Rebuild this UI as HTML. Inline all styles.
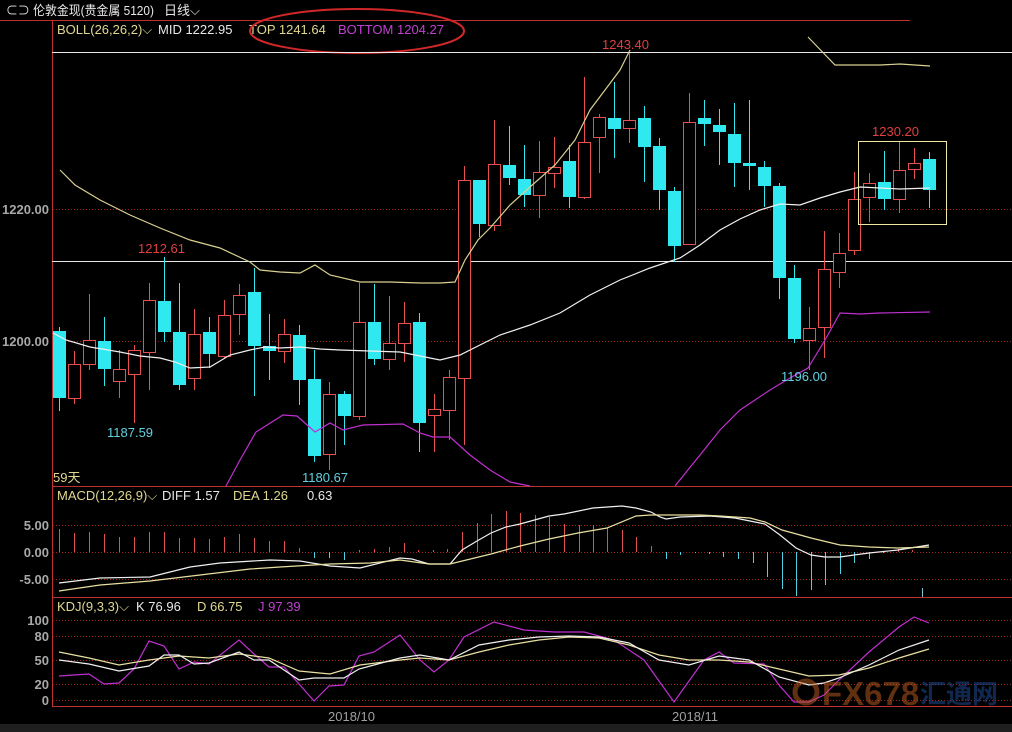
<!DOCTYPE html>
<html><head><meta charset="utf-8"><style>
html,body{margin:0;padding:0;background:#000;width:1012px;height:732px;overflow:hidden}
svg{display:block}
text{font-family:"Liberation Sans","Noto Sans CJK SC",sans-serif}
</style></head><body>
<svg id="s" width="1012" height="732" xmlns="http://www.w3.org/2000/svg" font-size="12">
<rect width="1012" height="732" fill="#000"/>
<rect x="0" y="724" width="1012" height="8" fill="#1f1f1f"/>
<text x="6" y="15" fill="#e8e8e8" style="font-size:13px" textLength="148" lengthAdjust="spacingAndGlyphs">⊂⊃ 伦敦金现(贵金属 5120)</text>
<text x="164" y="15" fill="#e8e8e8" style="font-size:13px">日线⌵</text>
<line x1="0" y1="20.5" x2="910" y2="20.5" stroke="#c03030"/>
<line x1="52.5" y1="20" x2="52.5" y2="706" stroke="#c03030"/>
<line x1="52" y1="486.5" x2="1012" y2="486.5" stroke="#c03030"/>
<line x1="52" y1="597.5" x2="1012" y2="597.5" stroke="#c03030"/>
<line x1="52" y1="706.5" x2="1012" y2="706.5" stroke="#c03030"/>
<g style="font-size:13px">
<text x="57" y="34" fill="#e0d890">BOLL(26,26,2)⌵</text>
<text x="158" y="34" fill="#e8e8e8">MID 1222.95</text>
<text x="249" y="34" fill="#e0d890">TOP 1241.64</text>
<text x="338" y="34" fill="#c040d0">BOTTOM 1204.27</text>
</g>
<ellipse cx="357" cy="31" rx="107" ry="22" fill="none" stroke="#d02828" stroke-width="2"/>
<line x1="52" y1="52.5" x2="1012" y2="52.5" stroke="#e8e8e8"/>
<line x1="52" y1="261.5" x2="1012" y2="261.5" stroke="#e8e8e8"/>
<g stroke="#a02020" stroke-dasharray="1,2">
<line x1="53" y1="209.5" x2="1012" y2="209.5"/><line x1="53" y1="341.5" x2="1012" y2="341.5"/>
<line x1="53" y1="525.5" x2="1012" y2="525.5"/><line x1="53" y1="552.5" x2="1012" y2="552.5"/><line x1="53" y1="579.5" x2="1012" y2="579.5"/>
<line x1="53" y1="620.5" x2="1012" y2="620.5"/><line x1="53" y1="636.5" x2="1012" y2="636.5"/><line x1="53" y1="660.5" x2="1012" y2="660.5"/><line x1="53" y1="684.5" x2="1012" y2="684.5"/><line x1="53" y1="700.5" x2="1012" y2="700.5"/>
</g>
<g fill="#a8a8a8" text-anchor="end" style="font-size:13px;font-weight:bold">
<text x="49" y="214">1220.00</text><text x="49" y="346">1200.00</text>
<text x="49" y="530">5.00</text><text x="49" y="557">0.00</text><text x="49" y="584">-5.00</text>
<text x="49" y="625">100</text><text x="49" y="641">80</text><text x="49" y="665">50</text><text x="49" y="689">20</text><text x="49" y="705">0</text>
</g>
<text x="328" y="721" fill="#a0a0a0" style="font-size:13px">2018/10</text>
<text x="672" y="721" fill="#a0a0a0" style="font-size:13px">2018/11</text>
<g id="g"></g>
<g style="font-size:13px">
<text x="602" y="49" fill="#e04040">1243.40</text>
<text x="138" y="253" fill="#e04040">1212.61</text>
<text x="107" y="437" fill="#60d0e0">1187.59</text>
<text x="302" y="482" fill="#60d0e0">1180.67</text>
<text x="781" y="381" fill="#60d0e0">1196.00</text>
<text x="872" y="136" fill="#e04040">1230.20</text>
<text x="53" y="482" fill="#e0d890">59天</text>
</g>
<rect x="858.5" y="141.5" width="88" height="83" fill="none" stroke="#f0e8a0"/>
<g style="font-size:13px">
<text x="57" y="500" fill="#e0d890">MACD(12,26,9)⌵</text>
<text x="162" y="500" fill="#e8e8e8">DIFF 1.57</text>
<text x="233" y="500" fill="#e0d890">DEA 1.26</text>
<text x="307" y="500" fill="#e8e8e8">0.63</text>
<text x="57" y="611" fill="#e0d890">KDJ(9,3,3)⌵</text>
<text x="136" y="611" fill="#e8e8e8">K 76.96</text>
<text x="197" y="611" fill="#e0d890">D 66.75</text>
<text x="258" y="611" fill="#c040d0">J 97.39</text>
</g>
<g opacity="0.5">
<circle cx="806" cy="692" r="11" fill="none" stroke="#c06020" stroke-width="5"/>
<text x="822" y="705" fill="#c06020" style="font-size:33px;font-weight:bold">FX678</text>
<text x="920" y="703" fill="#2050a0" style="font-size:26px;font-weight:bold">汇通网</text>
</g>
</svg>
<script>
var g=document.getElementById('g'),NS='http://www.w3.org/2000/svg';
function el(t,a){var e=document.createElementNS(NS,t);for(var k in a)e.setAttribute(k,a[k]);g.appendChild(e);return e;}
function pl(p,c){el('polyline',{points:p,fill:'none',stroke:c,'stroke-width':1.2});}
var C=[[59,331,398,327,411,0],[74,398,364,351,404,1],[89,364,340,294,370,1],[104,341,369,317,386,0],[119,381,369,350,398,1],[134,374,350,345,423,1],[149,352,300,283,390,1],[164,301,332,257,342,0],[179,332,385,283,390,0],[194,378,334,309,390,1],[209,332,354,317,368,0],[224,356,315,300,358,1],[239,314,295,284,335,1],[254,292,346,268,396,0],[269,346,351,314,380,0],[284,351,334,319,363,1],[299,335,380,325,405,0],[314,379,456,350,462,0],[329,454,394,382,470,1],[344,394,416,391,445,0],[359,416,322,283,420,1],[374,322,359,284,365,0],[389,359,343,296,370,1],[404,343,323,302,362,1],[419,322,423,313,452,0],[434,415,409,394,452,1],[449,410,377,370,440,1],[464,378,180,166,445,1],[479,180,224,180,237,0],[494,225,164,120,231,1],[509,165,178,126,185,0],[524,179,195,145,207,0],[539,195,172,141,218,1],[554,173,167,137,188,1],[569,161,197,145,208,0],[584,197,142,77,199,1],[599,137,117,114,173,1],[614,118,129,82,158,0],[629,128,120,53,143,1],[644,118,147,106,182,0],[659,146,190,138,210,0],[674,191,246,187,262,0],[689,244,122,93,244,1],[704,118,124,100,146,0],[719,125,132,109,165,0],[734,134,163,103,187,0],[749,163,166,100,190,0],[764,167,186,161,207,0],[779,186,278,183,299,0],[794,278,339,265,343,0],[809,340,328,307,370,1],[824,327,269,231,358,1],[839,272,253,233,288,1],[854,250,199,172,255,1],[869,197,183,173,222,1],[884,182,199,151,210,0],[899,199,170,141,213,1],[914,169,163,148,179,1],[929,159,190,152,208,0]];
C.forEach(function(c){var up=c[5],col=up?'#e85050':'#30e8f0',t=Math.min(c[1],c[2]),b=Math.max(c[1],c[2]);
el('line',{x1:c[0]+.5,y1:c[3],x2:c[0]+.5,y2:t,stroke:col});el('line',{x1:c[0]+.5,y1:b,x2:c[0]+.5,y2:c[4],stroke:col});
if(up)el('rect',{x:c[0]-5.5,y:t+.5,width:12,height:Math.max(b-t,1),fill:'#000',stroke:col});else el('rect',{x:c[0]-6,y:t,width:13,height:Math.max(b-t,2),fill:col});});
pl('53,333 66,340 90,347 120,352 140,356 160,358 175,362 190,368 210,367 230,355 250,350 265,347 280,348 300,347 320,349 340,350 370,351 400,352 420,356 440,360 460,355 480,345 500,335 530,325 560,313 590,295 620,280 650,268 680,258 700,245 720,230 740,219 760,210 780,204 800,205 820,198 840,192 860,187 880,188 900,189 930,188','#f0f0f0');
pl('60,170 75,185 100,200 130,215 160,228 190,240 220,248 250,262 260,270 280,272 300,273 315,265 330,275 360,282 390,282 420,283 440,283 455,282 465,260 478,240 490,228 510,205 530,187 555,165 575,140 590,110 605,90 620,70 630,50','#d8d090');
pl('808,37 835,65 880,65 900,64 930,66','#d8d090');
pl('226,486 240,460 256,432 283,415 297,416 315,432 330,423 343,430 363,425 403,424 420,433 433,437 450,437 470,455 490,470 510,482 530,486','#c030d0');
pl('675,486 700,455 720,430 740,410 770,390 790,378 808,368 825,340 840,313 860,314 880,313 930,312','#c030d0');
var H=[[59,529],[74,533],[89,532],[104,534],[119,537],[134,537],[149,532],[164,532],[179,538],[194,538],[209,539],[224,537],[239,534],[254,538],[269,541],[284,541],[299,548],[314,558],[329,558],[344,560],[359,550],[374,549],[389,547],[404,543],[418,550],[433,550],[447,549],[462,532],[477,523],[491,514],[506,511],[520,513],[535,515],[549,517],[564,524],[579,525],[593,525],[607,528],[622,530],[636,537],[651,546],[666,559],[680,555],[695,553],[709,554],[723,557],[738,559],[753,563],[767,577],[782,589],[796,596],[811,590],[825,585],[840,574],[854,563],[869,559],[883,553],[898,549],[912,550]];
H.forEach(function(h){var up=h[1]<552;el('line',{x1:h[0]+.5,y1:552,x2:h[0]+.5,y2:h[1],stroke:up?'#e05050':'#50d0e0'});});
el('line',{x1:922.5,y1:588,x2:922.5,y2:597,stroke:'#80c0d0'});
pl('59,583 100,578 150,577 190,567 220,563 270,560 300,561 330,566 360,568 400,558 412,559 429,564 450,564 462,550 477,541 491,533 506,527 520,524 549,516 564,514 593,508 622,506 636,508 651,512 660,517 666,519 680,517 710,516 735,518 750,521 765,524 780,535 796,548 811,555 825,557 840,557 854,555 869,553 898,550 929,545','#f0f0f0');
pl('59,591 100,585 150,581 200,575 250,569 280,567 330,564 370,563 400,560 429,564 450,564 491,554 520,546 549,539 578,533 607,528 636,516 651,515 680,515 700,515 720,516 750,518 765,522 782,530 811,538 840,545 869,547 898,548 929,547','#e8e0a0');
pl('59,676 89,674 104,684 119,683 134,669 149,641 164,646 179,669 194,662 209,664 239,640 254,654 269,667 284,667 314,701 329,686 344,685 359,656 374,652 400,635 420,660 434,672 449,660 464,637 494,622 524,630 554,632 584,632 614,640 644,660 674,702 704,660 719,652 734,663 764,664 779,685 794,702 809,702 824,695 839,680 869,652 899,627 914,617 929,623','#c030d0');
pl('59,652 89,658 119,665 149,660 179,656 209,658 239,654 269,658 299,671 330,674 360,665 400,660 420,658 449,660 479,652 509,645 539,640 569,637 599,638 629,645 659,655 689,660 719,660 749,662 779,669 809,676 839,675 869,668 899,658 929,649','#e8e0a0');
pl('59,660 89,664 119,671 149,666 164,655 179,655 194,664 209,663 239,652 254,660 269,660 299,680 314,678 344,678 359,669 374,665 400,658 420,655 449,660 479,645 509,640 539,637 569,636 599,637 629,643 659,660 689,665 719,656 749,660 779,677 809,685 824,683 839,678 869,665 899,650 929,640','#f0f0f0');
</script>
</body></html>
